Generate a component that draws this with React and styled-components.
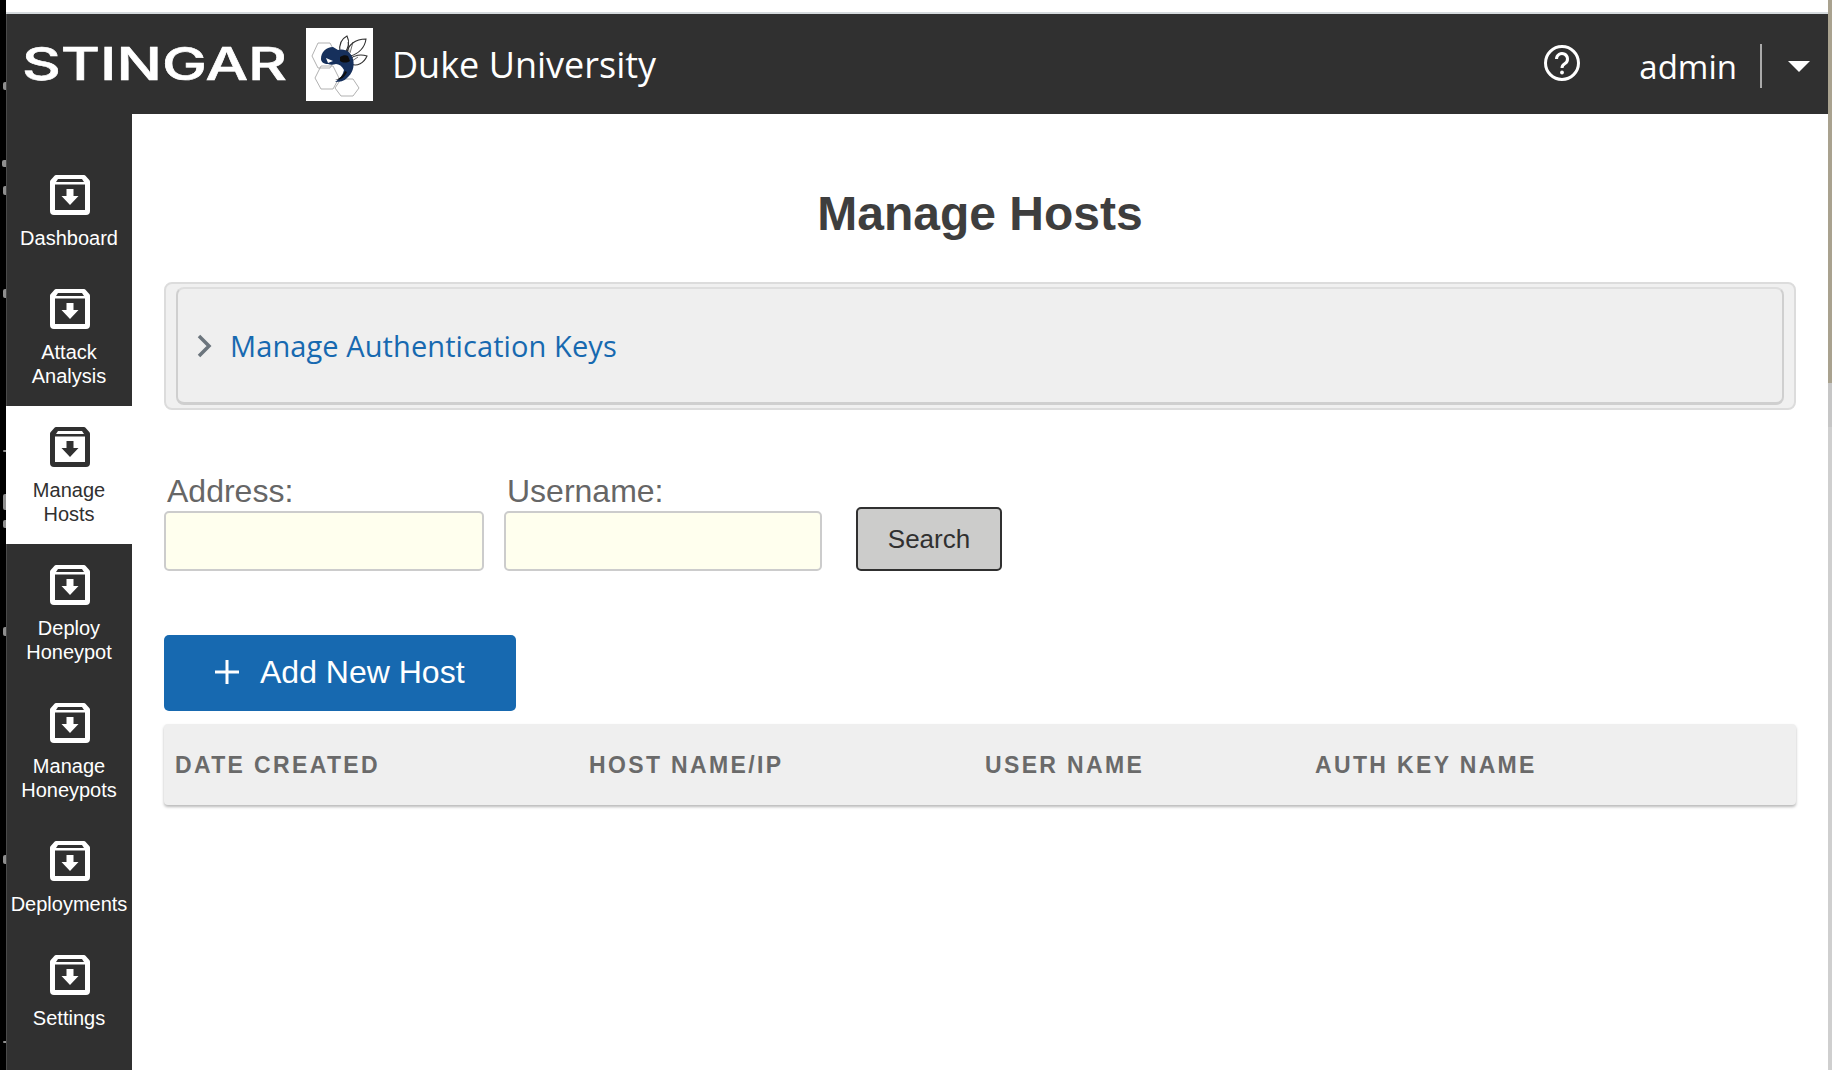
import React from 'react';
import styled, { createGlobalStyle } from 'styled-components';

const GlobalStyle = createGlobalStyle`
  html, body {
    margin: 0;
    padding: 0;
    height: 100%;
    overflow: hidden;
    background: #fff;
  }
  #root {
    height: 100%;
  }
  * {
    box-sizing: border-box;
  }
`;

const sans = '"Liberation Sans", Arial, sans-serif';
const humanist = '"Open Sans", "Noto Sans", sans-serif';

const Screen = styled.div`
  display: flex;
  width: 1832px;
  height: 1070px;
`;

const DesktopEdge = styled.div`
  position: relative;
  width: 6px;
  flex: none;
  background: #000;
`;

// bits of the window behind that peek out at the left edge
const EdgeMark = styled.span`
  position: absolute;
  right: 0;
  width: ${props => props.$w}px;
  height: ${props => props.$h}px;
  border-radius: 2px 0 0 2px;
  background: #8f8f8f;
`;

const WindowEdge = styled.div`
  width: 4px;
  flex: none;
  background: linear-gradient(
    #a9a28f 0,
    #a9a28f 383px,
    #c6c6c6 383px,
    #c6c6c6 427px,
    #cfcfcf 427px,
    #cfcfcf 100%
  );
`;

const Window = styled.div`
  flex: 1;
  min-width: 0;
  display: flex;
  flex-direction: column;
  padding-top: 12px;
  background: #fff;
`;

const Header = styled.header`
  height: 102px;
  flex: none;
  display: flex;
  align-items: center;
  border-top: 2px solid #d5dadd;
  background: #303030;
  box-shadow: inset 1px 0 0 #4a4a4a;
  padding: 0 18px 0 16px;
`;

const Brand = styled.div`
  display: flex;
  align-items: center;
`;

const Logo = styled.svg`
  display: block;
  width: 265px;
  height: 56px;
`;

const Mascot = styled.svg`
  display: block;
  width: 67px;
  height: 73px;
  margin-left: 19px;
  background: #fff;
`;

const OrgName = styled.div`
  margin-left: 19px;
  font-family: ${humanist};
  font-size: 36px;
  color: #fff;
`;

const UserArea = styled.div`
  margin-left: auto;
  display: flex;
  align-items: center;
  padding-top: 4px;
`;

const HelpIcon = styled.svg`
  display: block;
  width: 38px;
  height: 38px;
  margin-top: -6px;
`;

const UserName = styled.div`
  margin-left: 58px;
  font-family: ${humanist};
  font-size: 33px;
  color: #fff;
`;

const Divider = styled.div`
  width: 2px;
  height: 44px;
  margin-left: 23px;
  background: #aaa;
`;

const Caret = styled.div`
  width: 0;
  height: 0;
  margin-left: 26px;
  border-left: 11px solid transparent;
  border-right: 11px solid transparent;
  border-top: 11px solid #fff;
`;

const Body = styled.div`
  flex: 1;
  min-height: 0;
  display: flex;
`;

const Sidebar = styled.nav`
  width: 126px;
  flex: none;
  padding-top: 40px;
  background: #303030;
  box-shadow: inset 1px 0 0 #4a4a4a;
`;

const NavItem = styled.a`
  display: flex;
  flex-direction: column;
  align-items: center;
  height: ${props => (props.$lines === 2 ? '138px' : '114px')};
  padding-top: 20px;
  background: ${props => (props.$active ? '#fff' : 'transparent')};
  color: ${props => (props.$active ? '#303030' : '#fff')};
  font-family: ${sans};
  font-size: 20px;
  line-height: 24px;
  text-align: center;
`;

const NavIcon = styled.svg`
  display: block;
  width: 42px;
  height: 42px;
  margin-bottom: 10px;
  margin-left: 2px;
`;

const Main = styled.main`
  flex: 1;
  min-width: 0;
  padding: 0 32px 0 32px;
`;

const Title = styled.h1`
  margin: 0;
  padding-top: 66px;
  height: 168px;
  font-family: ${sans};
  font-size: 48px;
  line-height: 68px;
  font-weight: 700;
  color: #3e3e3e;
  text-align: center;
`;

const AccordionFrame = styled.div`
  height: 128px;
  padding: 3px 10px 3px 10px;
  border: 2px solid #dcdcdc;
  border-radius: 8px;
  background: #f0f0f0;
`;

const AccordionHead = styled.div`
  height: 100%;
  display: flex;
  align-items: center;
  padding-left: 18px;
  border: 2px solid #cfcfcf;
  border-top-color: #dedede;
  border-bottom-width: 3px;
  border-radius: 8px;
  background: #efefef;
  font-family: ${humanist};
  font-size: 29px;
  letter-spacing: 0.09px;
  color: #1769b0;
`;

const Chevron = styled.svg`
  display: block;
  width: 16px;
  height: 26px;
  margin-right: 18px;
`;

const SearchForm = styled.form`
  display: flex;
  align-items: flex-end;
  margin-top: 62px;
`;

const Field = styled.label`
  display: flex;
  flex-direction: column;
  margin-right: ${props => props.$gap}px;
  font-family: ${sans};
  font-size: 32px;
  line-height: 39px;
  color: #666;
`;

const FieldLabel = styled.span`
  padding-left: 3px;
`;

const FieldInput = styled.input`
  width: ${props => props.$width}px;
  height: 60px;
  border: 2px solid #ccc;
  border-radius: 5px;
  background: #ffffee;
`;

const SearchButton = styled.button`
  width: 146px;
  height: 64px;
  margin-left: 13px;
  border: 2px solid #303030;
  border-radius: 5px;
  background: #cccccb;
  font-family: ${sans};
  font-size: 26px;
  color: #303030;
`;

const AddButton = styled.button`
  display: flex;
  align-items: center;
  width: 352px;
  height: 76px;
  margin-top: 64px;
  padding: 0 0 2px 50px;
  border: 0;
  border-radius: 5px;
  background: #1769b0;
  font-family: ${sans};
  font-size: 32px;
  color: #fff;
`;

const PlusIcon = styled.svg`
  display: block;
  width: 26px;
  height: 26px;
  margin-right: 20px;
`;

const TableHead = styled.div`
  display: grid;
  grid-template-columns: 414px 396px 330px 1fr;
  align-items: center;
  height: 81px;
  margin-top: 13px;
  padding: 1px 0 0 11px;
  border-radius: 4px;
  background: #efefef;
  box-shadow: 0 2px 3px rgba(0, 0, 0, 0.28);
`;

const ColumnTitle = styled.div`
  font-family: ${sans};
  font-size: 23px;
  font-weight: 700;
  letter-spacing: 2.35px;
  color: #6a6a6a;
`;

const navItems = [
  { lines: ['Dashboard'] },
  { lines: ['Attack', 'Analysis'] },
  { lines: ['Manage', 'Hosts'], active: true },
  { lines: ['Deploy', 'Honeypot'] },
  { lines: ['Manage', 'Honeypots'] },
  { lines: ['Deployments'] },
  { lines: ['Settings'] },
];

const columns = ['DATE CREATED', 'HOST NAME/IP', 'USER NAME', 'AUTH KEY NAME'];

const edgeMarks = [
  { y: 82, w: 3, h: 8 },
  { y: 160, w: 4, h: 7 },
  { y: 186, w: 3, h: 9 },
  { y: 289, w: 3, h: 9 },
  { y: 450, w: 3, h: 2 },
  { y: 494, w: 3, h: 16 },
  { y: 520, w: 3, h: 8 },
  { y: 627, w: 3, h: 9 },
  { y: 855, w: 3, h: 9 },
  { y: 1041, w: 3, h: 2 },
];

const ArchiveIcon = () => (
  <NavIcon viewBox="0 0 42 42">
    <path
      fill="currentColor"
      fillRule="evenodd"
      d="M7 1h28a2 2 0 0 1 1.500.700l4 4.600a3 3 0 0 1 .500 1.700v29a4 4 0 0 1-4 4H5a4 4 0 0 1-4-4V8a3 3 0 0 1 .500-1.700l4-4.600A2 2 0 0 1 7 1zm2 4l-2 3h28l-2-3H9zM6 10.500V36h30V10.500H6z"
    />
    <path fill="currentColor" d="M17.500 15h7v7h5L21 31l-8.500-9h5z" />
  </NavIcon>
);

const HornetMascot = () => (
  <Mascot viewBox="0 0 67 73">
    <g fill="none" stroke="#a8a8a8" strokeWidth="0.9">
      <path d="M6 28l6-13h12l7 13-7 12H12z" />
      <path d="M9 50l6-12h12l6 12-6 11H15z" />
      <path d="M29 60l6-9h12l6 9-6 8H35z" />
    </g>
    <g fill="#fff" stroke="#303030" strokeWidth="1.100">
      <path d="M34 24c-1-7 1-13 7-16 3 6 1 13-3 18z" />
      <path d="M41 25c1-8 8-14 19-14-1 8-7 15-16 17z" />
      <path d="M44 31c4-4 11-5 17-3-3 7-10 11-16 8z" />
      <path d="M42 14l1 10M47 14l-3 11M52 29l-6 4" fill="none" strokeWidth="0.700" />
    </g>
    <path
      fill="#16305c"
      d="M15 31c0-7 5-12 12-12l5 3c7-2 13 2 15 9 2 8-1 15-6 19-3 3-7 4-12 4 5-3 8-7 9-12-2-4-5-6-8-6-3 1-6 1-8 0-4 0-7-2-7-5z"
    />
    <path fill="#0d0d0d" d="M34 29c3-2 6-2 8-1l2 5c-3 2-7 2-10 0z" />
    <path fill="#0d0d0d" d="M29 52c4-1 8-4 10-9l2 1c-2 5-6 8-12 8z" />
    <path fill="#fff" d="M20 30l7 3-5 2z" />
  </Mascot>
);

const App = () => (
  <Screen>
    <GlobalStyle />
    <DesktopEdge>
      {edgeMarks.map(mark => (
        <EdgeMark key={mark.y} $w={mark.w} $h={mark.h} style={{ top: mark.y }} />
      ))}
    </DesktopEdge>
    <Window>
      <Header>
        <Brand>
          <Logo viewBox="0 0 265 56">
            <text
              x="0"
              y="44"
              fill="#fff"
              stroke="#fff"
              strokeWidth="0.6"
              fontFamily="Inter, sans-serif"
              fontSize="45"
              fontWeight="500"
              textLength="265"
              lengthAdjust="spacingAndGlyphs"
            >
              STINGAR
            </text>
          </Logo>
          <HornetMascot />
          <OrgName>Duke University</OrgName>
        </Brand>
        <UserArea>
          <HelpIcon viewBox="0 0 38 38">
            <circle cx="19" cy="19" r="16.500" fill="none" stroke="#fff" strokeWidth="3" />
            <path
              d="M13.500 15a5.500 5.500 0 1 1 8.500 4.600c-2 1.300-3 2.200-3 4.400"
              fill="none"
              stroke="#fff"
              strokeWidth="3"
            />
            <circle cx="19" cy="28.500" r="1.900" fill="#fff" />
          </HelpIcon>
          <UserName>admin</UserName>
          <Divider />
          <Caret />
        </UserArea>
      </Header>
      <Body>
        <Sidebar>
          {navItems.map(item => (
            <NavItem key={item.lines.join(' ')} $lines={item.lines.length} $active={item.active}>
              <ArchiveIcon />
              {item.lines.map(line => (
                <span key={line}>{line}</span>
              ))}
            </NavItem>
          ))}
        </Sidebar>
        <Main>
          <Title>Manage Hosts</Title>
          <AccordionFrame>
            <AccordionHead>
              <Chevron viewBox="0 0 16 26">
                <path d="M3 3l10 10L3 23" fill="none" stroke="#6c757d" strokeWidth="3.500" />
              </Chevron>
              Manage Authentication Keys
            </AccordionHead>
          </AccordionFrame>
          <SearchForm>
            <Field $gap={20}>
              <FieldLabel>Address:</FieldLabel>
              <FieldInput $width={320} />
            </Field>
            <Field $gap={21}>
              <FieldLabel>Username:</FieldLabel>
              <FieldInput $width={318} />
            </Field>
            <SearchButton type="button">Search</SearchButton>
          </SearchForm>
          <AddButton type="button">
            <PlusIcon viewBox="0 0 26 26">
              <path d="M13 1v24M1 13h24" fill="none" stroke="#fff" strokeWidth="3" />
            </PlusIcon>
            Add New Host
          </AddButton>
          <TableHead>
            {columns.map(name => (
              <ColumnTitle key={name}>{name}</ColumnTitle>
            ))}
          </TableHead>
        </Main>
      </Body>
    </Window>
    <WindowEdge />
  </Screen>
);

export default App;
